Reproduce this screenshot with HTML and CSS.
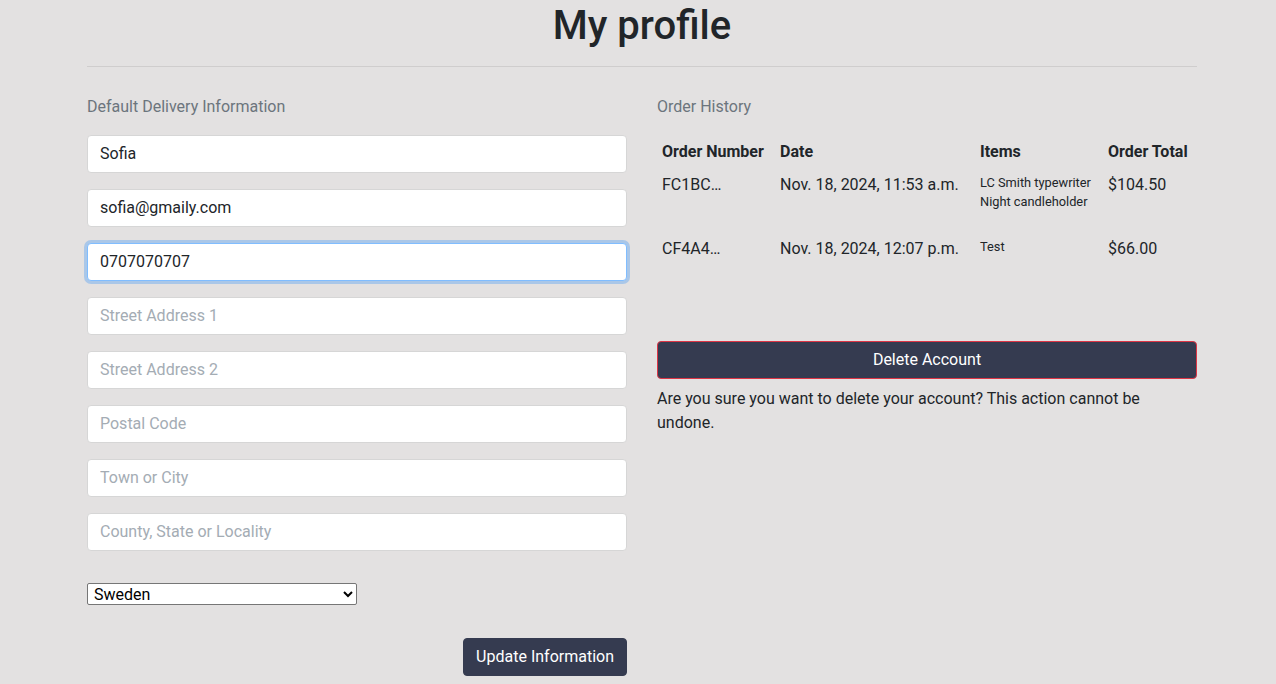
FILE: index.html
```html
<!DOCTYPE html>
<html lang="en">
<head>
<meta charset="utf-8">
<title>My profile</title>
<link rel="stylesheet" href="styles.css">
</head>
<body>
<div class="container">
  <h1 class="title">My profile</h1>
  <hr class="divider">
  <div class="row">
    <div class="col">
      <p class="muted label-left">Default Delivery Information</p>
      <form class="form">
        <input class="field" type="text" value="Sofia">
        <input class="field" type="email" value="sofia@gmaily.com">
        <input class="field focused" type="text" value="0707070707">
        <input class="field" type="text" placeholder="Street Address 1">
        <input class="field" type="text" placeholder="Street Address 2">
        <input class="field" type="text" placeholder="Postal Code">
        <input class="field" type="text" placeholder="Town or City">
        <input class="field" type="text" placeholder="County, State or Locality">
        <select class="country">
          <option>Sweden</option>
        </select>
        <div class="actions">
          <button class="btn" type="button">Update Information</button>
        </div>
      </form>
    </div>
    <div class="col">
      <p class="muted label-right">Order History</p>
      <table class="orders">
        <colgroup>
          <col class="c1"><col class="c2"><col class="c3"><col class="c4">
        </colgroup>
        <thead>
          <tr><th>Order Number</th><th>Date</th><th>Items</th><th>Order Total</th></tr>
        </thead>
        <tbody>
          <tr>
            <td>FC1BC…</td>
            <td>Nov. 18, 2024, 11:53 a.m.</td>
            <td><ul class="items"><li>LC Smith typewriter</li><li>Night candleholder</li></ul></td>
            <td>$104.50</td>
          </tr>
          <tr>
            <td>CF4A4…</td>
            <td>Nov. 18, 2024, 12:07 p.m.</td>
            <td><ul class="items"><li>Test</li></ul></td>
            <td>$66.00</td>
          </tr>
        </tbody>
      </table>
      <button class="btn btn-danger-outline" type="button">Delete Account</button>
      <p class="warning">Are you sure you want to delete your account? This action cannot be undone.</p>
    </div>
  </div>
</div>
</body>
</html>
```
FILE: styles.css
```css
html, body {
  margin: 0;
  padding: 0;
}
body {
  background: #e3e1e1;
  font-family: Roboto, "Liberation Sans", Arial, sans-serif;
  font-size: 16px;
  line-height: 1.5;
  color: #212529;
}
.container {
  width: 1110px;
  margin: 0 auto;
  padding-left: 8px;
}
.title {
  margin: 2px 0 0 0;
  font-size: 40px;
  font-weight: 500;
  line-height: 48px;
  text-align: center;
  color: #212529;
}
.divider {
  margin: 16px 0 28px 0;
  border: 0;
  border-top: 1px solid #cfcdcd;
}
.row {
  display: grid;
  grid-template-columns: 540px 540px;
  column-gap: 30px;
}
.muted {
  color: #6c757d;
  margin: 0;
}
.label-left {
  margin-bottom: 16px;
}
.label-right {
  margin-bottom: 16px;
}
.form {
  display: flex;
  flex-direction: column;
  margin: 0;
}
.field {
  box-sizing: border-box;
  display: block;
  width: 100%;
  height: 38px;
  margin: 0 0 16px 0;
  padding: 5px 12px 7px 12px;
  font-family: inherit;
  font-size: 16px;
  line-height: 1.5;
  color: #212529;
  background: #fff;
  border: 1px solid #d6d6d6;
  border-radius: 4px;
  outline: none;
}
.field::placeholder {
  color: #a4acb4;
  opacity: 1;
}
.field.focused {
  border-color: #80bdff;
  box-shadow: 0 0 0 3px rgba(0, 123, 255, 0.25);
}
.country {
  box-sizing: border-box;
  width: 270px;
  height: 22px;
  margin: 16px 0 0 0;
  padding: 0 2px;
  font-family: inherit;
  font-size: 16px;
  line-height: 18px;
  color: #000;
  background: #fff;
  border: 1px solid #767676;
  border-radius: 2px;
}
.actions {
  display: flex;
  justify-content: flex-end;
  margin-top: 33px;
}
.btn {
  box-sizing: border-box;
  height: 38px;
  padding: 6px 12px;
  font-family: inherit;
  font-size: 16px;
  line-height: 1.5;
  color: #fff;
  background: #353b50;
  border: 1px solid #353b50;
  border-radius: 4px;
  cursor: pointer;
}
.btn-danger-outline {
  display: block;
  width: 100%;
  margin-top: 64px;
  border-color: #dc3545;
}
.warning {
  margin: 8px 0 0 0;
}
.orders {
  width: 540px;
  border-collapse: collapse;
  table-layout: fixed;
}
.c1 { width: 118px; }
.c2 { width: 200px; }
.c3 { width: 128px; }
.c4 { width: 94px; }
.orders th,
.orders td {
  padding: 4.8px 5px;
  text-align: left;
  vertical-align: top;
  white-space: nowrap;
}
.orders th {
  font-weight: 700;
}
.items {
  list-style: none;
  margin: 0 0 16px 0;
  padding: 0;
  font-size: 12.8px;
  line-height: 19px;
}
```
